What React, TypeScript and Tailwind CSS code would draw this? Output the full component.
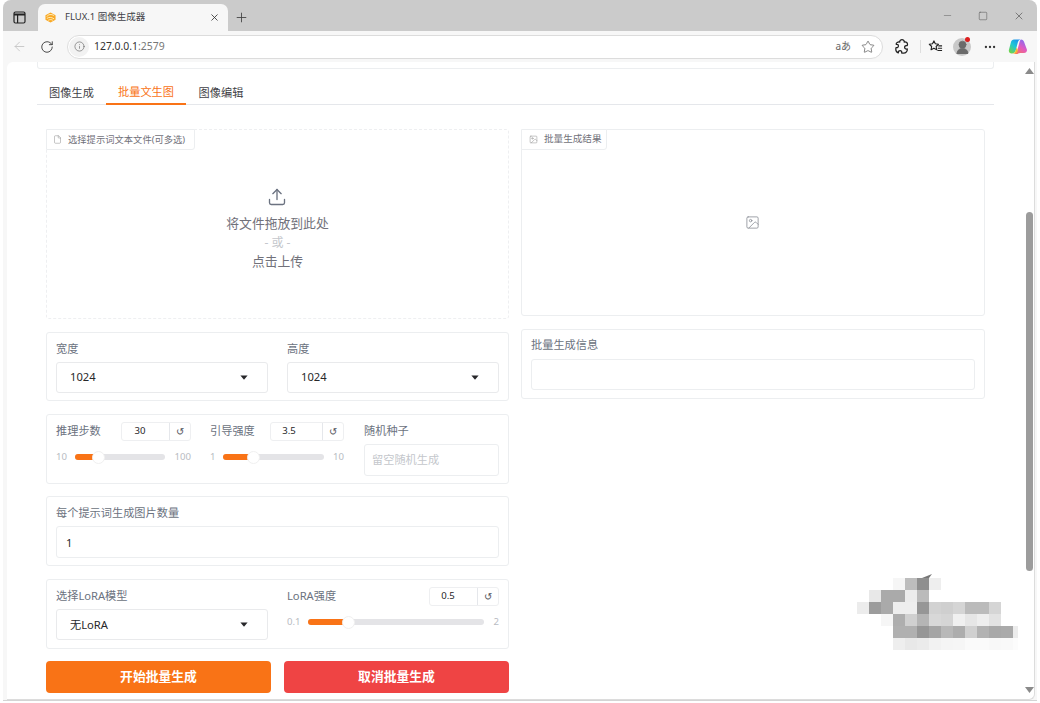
import React from "react";
import { Upload, RotateCw, ArrowLeft, Info, Star, X, Plus, Minus, Square, File, ImageIcon, Ellipsis, UserRound } from "lucide-react";

const Tri = () => (
  <svg width="8" height="5" viewBox="0 0 8 5" className="shrink-0"><path d="M0.4 0.4h7.200L4 4.700z" fill="#27272a" /></svg>
);

const Field = ({ label, value, valueClass = "" }: { label: string; value: string; valueClass?: string }) => (
  <div className="flex-1 min-w-0 flex flex-col">
    <div className="h-[29px] text-[11.2px] leading-[32px] text-[#6b7280]">{label}</div>
    <div className="h-[31px] flex items-center justify-between pl-[13px] pr-[19px] border border-[#e9eaec] rounded-[3px] bg-white text-[11.2px] text-[#27272a]">
      <span className={valueClass}>{value}</span>
      <Tri />
    </div>
  </div>
);

const NumBox = ({ value, w }: { value: string; w: number }) => (
  <div className="h-[19px] flex border border-[#eeeff1] rounded-[3px] text-[9.6px] text-[#27272a] bg-white shrink-0" style={{ width: w }}>
    <span className="w-[36px] flex items-center justify-center">{value}</span>
    <span className="flex-1" />
    <span className="w-[21px] border-l border-[#e5e7eb] flex items-center justify-center text-[#52525b] text-[10px]">↺</span>
  </div>
);

const Slider = ({ min, max, pct, track }: { min: string; max: string; pct: number; track: number }) => (
  <div className="flex items-center h-[14px] text-[9.6px] text-[#b8bbc2]">
    <span>{min}</span>
    <div className="flex-1" />
    <div className="relative h-[6px] rounded-full bg-[#e4e4e7] shrink-0 -ml-[1px] mr-[1px]" style={{ width: track }}>
      <div className="h-full rounded-full bg-[#f97316]" style={{ width: `${pct}%` }} />
      <div className="absolute top-[-3.5px] w-[13px] h-[13px] rounded-full bg-white border border-[#f0f0f0]" style={{ left: `calc(${pct}% - 3px)` }} />
    </div>
    <div className="flex-1" />
    <span>{max}</span>
  </div>
);

const Card = ({ className = "", children }: { className?: string; children: React.ReactNode }) => (
  <div className={`border border-[#eceef0] rounded-[3px] bg-white ${className}`}>{children}</div>
);

const mosaic: [number, number, string][] = [
  [0,3,"#f6f6f6"],[0,4,"#bdbdbd"],[0,5,"#8f8f8f"],[0,6,"#eeeeee"],
  [1,1,"#e8e8e8"],[1,2,"#aaaaaa"],[1,3,"#aaaaaa"],[1,4,"#ececec"],[1,5,"#bbbbbb"],
  [2,0,"#ececec"],[2,1,"#9c9c9c"],[2,2,"#aaaaaa"],[2,3,"#eeeeee"],[2,4,"#eeeeee"],[2,5,"#969696"],[2,6,"#d2d2d2"],[2,7,"#cfcfcf"],[2,8,"#d5d5d5"],[2,9,"#bbbbbb"],[2,10,"#bbbbbb"],[2,11,"#d5d5d5"],
  [3,2,"#f6f6f6"],[3,3,"#aeaeae"],[3,4,"#d0d0d0"],[3,5,"#b5b5b5"],[3,6,"#d8d8d8"],[3,7,"#d5d5d5"],[3,8,"#f0f0f0"],[3,9,"#e6e6e6"],[3,10,"#eeeeee"],[3,11,"#e2e2e2"],
  [4,3,"#b0b0b0"],[4,4,"#b0b0b0"],[4,5,"#969696"],[4,6,"#a5a5a5"],[4,7,"#b8b8b8"],[4,8,"#adadad"],[4,9,"#d0d0d0"],[4,10,"#b2b2b2"],[4,11,"#a8a8a8"],[4,12,"#aaaaaa"],[4,13,"#ececec"],
  [5,3,"#eeeeee"],[5,4,"#e8e8e8"],[5,5,"#ebebeb"],[5,6,"#f2f2f2"],[5,7,"#f5f5f5"],[5,8,"#f6f6f6"],[5,9,"#fafafa"],[5,10,"#fafafa"],[5,11,"#f8f8f8"],[5,12,"#f9f9f9"],[5,13,"#fcfcfc"],
];

export default function App() {
  return (
    <div className="w-[1040px] h-[703px] overflow-hidden bg-white px-[3px] pb-[2px]" style={{ fontFamily: '"Noto Sans", "Noto Sans CJK SC", sans-serif' }}>
      <div className="relative h-full flex flex-col rounded-t-[8px] bg-[#f7f7f7] overflow-hidden border-b border-[#d4d4d4]">
        {/* tab strip */}
        <div className="h-[31px] shrink-0 bg-[#cbcbcb] flex items-end">
          <div className="w-[35px] h-full flex items-center justify-center pr-[3px] pt-[3px]">
            <svg width="13" height="13" viewBox="0 0 13 13" fill="none" stroke="#222" strokeWidth="1.2"><rect x="1" y="1" width="11" height="11" rx="1.5" /><path d="M1 3.4h11" strokeWidth="2" /><path d="M4.6 3.4V12" /></svg>
          </div>
          <div className="w-[190px] h-[27px] bg-[#f7f7f7] rounded-t-[7px] flex items-center pl-[7px] pr-[8px]">
            <svg width="11" height="11" viewBox="0 0 12 12" className="shrink-0">
              <path d="M6 .5 11.500 3.500v5L6 11.500.5 8.500v-5z" fill="#f9a825" />
              <path d="M2 5c1.500-2.500 5-3 8-1M2 7c2.500-1.500 5-1.500 8 .5M3.500 9c2-1 3.500-1 5 0" fill="none" stroke="#fff3c4" strokeWidth="1" />
            </svg>
            <span className="ml-[9px] text-[9.5px] text-[#3f3f46] whitespace-nowrap">FLUX.1 图像生成器</span>
            <div className="flex-1" />
            <X size={11} color="#333" strokeWidth={1.8} />
          </div>
          <div className="w-[26px] h-full flex items-center justify-center pt-[3px]"><Plus size={15} color="#444" strokeWidth={1.4} /></div>
          <div className="flex-1" />
          <div className="h-full flex items-center">
            <div className="w-[36px] flex justify-center"><Minus size={11} color="#666" strokeWidth={1.2} /></div>
            <div className="w-[36px] flex justify-center"><Square size={10} color="#555" strokeWidth={1.3} /></div>
            <div className="w-[36px] flex justify-center"><X size={12} color="#444" strokeWidth={1.2} /></div>
          </div>
        </div>
        {/* toolbar */}
        <div className="h-[31px] shrink-0 flex items-center">
          <div className="w-[32px] flex justify-center"><ArrowLeft size={15} color="#c4c4c4" strokeWidth={1.4} /></div>
          <div className="w-[24px] flex justify-center"><RotateCw size={14} color="#333" strokeWidth={1.5} /></div>
          <div className="ml-[8px] w-[816px] h-[24px] bg-white rounded-full border border-[#dcdcdc] flex items-center">
            <div className="w-[20px] h-[20px] ml-[1px] rounded-full bg-[#f2f2f2] flex items-center justify-center"><Info size={11} color="#666" strokeWidth={1.4} /></div>
            <span className="ml-[5px] text-[10.4px] text-[#333]">127.0.0.1<span className="text-[#777]">:2579</span></span>
            <div className="flex-1" />
            <span className="text-[10px] text-[#666]">aあ</span>
            <Star size={14} color="#555" strokeWidth={1.2} className="ml-[10px] mr-[7px]" />
          </div>
          <div className="w-[37px] flex justify-center">
            <svg width="14" height="15" viewBox="0 0 14 15" fill="none" stroke="#222" strokeWidth="1.25" strokeLinejoin="round" strokeLinecap="round">
              <path d="M4.800 3.100C4.500 1.300 6 .7 7 .7s2.500.8 2.200 2.400c1.700-.4 3.300.4 3.300 2.200 0 .5-.2 1-.3 1.400-1.500-.5-2.600.4-2.600 1.600s1.200 2.200 2.700 1.600c.2 2.300-1.200 4.300-3.800 4.300-.7 0-1.300-.1-1.900-.2.600-1.300-.3-2.400-1.500-2.400s-2.100 1-1.700 2.200C1.900 13.500.8 12.200.8 10.200c0-.6.100-1.100.3-1.600C2.300 9 3.400 8.200 3.400 7S2.400 5 1.200 5.400C1 4 2.900 2.600 4.800 3.100z" />
            </svg>
          </div>
          <div className="w-[1px] h-[13px] bg-[#dedede]" />
          <div className="w-[32px] flex justify-center pr-[4px]">
            <svg width="15" height="15" viewBox="0 0 16 16" fill="none" stroke="#222" strokeWidth="1.2" strokeLinejoin="round"><path d="M6.300 2 7.800 5.100 11.200 5.600 8.700 8 9.300 11.400 6.300 9.800 3.300 11.400 3.900 8 1.400 5.600 4.800 5.100z" /><path d="M11 7.300h4M10.500 9.800h4.500M10 12.300h5" /></svg>
          </div>
          <div className="relative w-[18px] h-[18px] rounded-full bg-[#c9c9c9] overflow-hidden flex items-end justify-center">
            <UserRound size={17} color="#6b6b6b" fill="#6b6b6b" strokeWidth={1} />
          </div>
          <div className="w-[5px] h-[5px] rounded-full bg-[#dc1f1f] -ml-[6px] -mt-[14px] z-10" />
          <div className="w-[38px] ml-[-1px] flex justify-center pl-[3px]"><Ellipsis size={14} color="#333" strokeWidth={2} /></div>
          <div className="ml-[1px]">
            <svg width="20" height="18" viewBox="0 0 20 18">
              <defs>
                <linearGradient id="c1" x1="0.8" y1="0" x2="0.1" y2="0.9"><stop offset="0" stopColor="#1c8df0" /><stop offset="0.5" stopColor="#1fc7d4" /><stop offset="1" stopColor="#6fd44a" /></linearGradient>
                <linearGradient id="c2" x1="0.8" y1="0" x2="0.2" y2="1"><stop offset="0" stopColor="#7f6cf6" /><stop offset="0.5" stopColor="#e25ac0" /><stop offset="1" stopColor="#f8745a" /></linearGradient>
              </defs>
              <path d="M6 1.500h6.500c-1.500.4-2.300 1.500-2.700 3L8 11.500c-.7 2.500-2 4-4.300 4C1.500 15.500.3 13.800 1 11.500L3 4C3.400 2.500 4.500 1.500 6 1.500z" fill="url(#c1)" />
              <path d="M13 1.500c1.700 0 2.600 1 3 2.300l2.800 7.500c.7 2-.8 3.700-2.800 3.700h-2.500c-1.800 0-3.300.3-4 1h-4c2.200-.4 3.300-2 3.900-4l2-7.500C11.800 3 12 2 13 1.500z" fill="url(#c2)" />
              <path d="M3.700 15.500c2.300 0 3.700-1.500 4.300-4l.6-2c1.300 1.500 1.500 3.500.5 4.800-.7.900-1.600 1.200-2.600 1.200z" fill="#f8b62d" />
            </svg>
          </div>
        </div>
        {/* page */}
        <div className="flex-1 min-h-0 ml-[4px] mr-[2px] flex bg-white rounded-tl-[6px] rounded-br-[6px] border-r border-[#dcdcdc] border-b relative overflow-hidden">
          <div className="flex-1 min-w-0 flex flex-col">
            <div className="ml-[30px] w-[957px] h-[7px] border border-t-0 border-[#eceef0] rounded-b-[3px] shrink-0" />
            {/* tabs */}
            <div className="ml-[30px] w-[957px] mt-[11px] h-[25px] border-b border-[#e5e7eb] flex text-[11.2px] text-[#3f3f46] shrink-0">
              <div className="w-[69px] flex items-center justify-center h-[24px] pt-[2px]">图像生成</div>
              <div className="w-[80px] flex items-center justify-center h-[25px] pt-[2px] text-[#f97316] border-b-2 border-[#f97316]">批量文生图</div>
              <div className="w-[70px] flex items-center justify-center h-[24px] pt-[2px]">图像编辑</div>
            </div>
            <div className="ml-[39px] mt-[24px] flex gap-[12px] items-start">
              {/* left */}
              <div className="w-[463px] flex flex-col">
                <div className="h-[190px] border border-dashed border-[#eeeff1] rounded-[3px] relative flex flex-col items-center">
                  <div className="absolute left-[-1px] top-[-1px] h-[21px] w-[149px] border border-[#eceef0] rounded-br-[3px] flex items-center pl-[6px] bg-white text-[9.3px] text-[#71717a]">
                    <File size={9} color="#888" strokeWidth={1.3} />
                    <span className="ml-[6px] whitespace-nowrap">选择提示词文本文件(可多选)</span>
                  </div>
                  <Upload size={20} color="#6b7280" strokeWidth={1.6} className="mt-[57px] mr-[1px]" />
                  <div className="mt-[8px] text-[12.8px] leading-[17px] text-[#71717a]">将文件拖放到此处</div>
                  <div className="mt-[1px] text-[12px] leading-[19px] text-[#c4c7cc]">- 或 -</div>
                  <div className="text-[12.8px] leading-[19px] text-[#71717a]">点击上传</div>
                </div>
                <Card className="mt-[13px] h-[69px] px-[9px] flex gap-[19px]">
                  <Field label="宽度" value="1024" />
                  <Field label="高度" value="1024" />
                </Card>
                <Card className="mt-[13px] h-[70px] pl-[9px] pr-[9px] pt-[7px] flex">
                  <div className="w-[135px] flex flex-col">
                    <div className="flex items-center justify-between h-[19px]">
                      <span className="text-[11.2px] text-[#6b7280]">推理步数</span>
                      <NumBox value="30" w={70} />
                    </div>
                    <div className="mt-[9px]"><Slider min="10" max="100" pct={22} track={90} /></div>
                  </div>
                  <div className="w-[134px] ml-[19px] flex flex-col">
                    <div className="flex items-center justify-between h-[19px]">
                      <span className="text-[11.2px] text-[#6b7280]">引导强度</span>
                      <NumBox value="3.5" w={74} />
                    </div>
                    <div className="mt-[9px]"><Slider min="1" max="10" pct={27} track={101} /></div>
                  </div>
                  <div className="flex-1 ml-[20px] flex flex-col">
                    <div className="h-[19px] flex items-center text-[11.2px] text-[#6b7280]">随机种子</div>
                    <div className="mt-[3px] h-[32px] border border-[#eceef0] rounded-[3px] flex items-center pl-[7px] text-[11.2px] text-[#c4c7cc]">留空随机生成</div>
                  </div>
                </Card>
                <Card className="mt-[12px] h-[70px] px-[9px] flex flex-col">
                  <div className="h-[29px] text-[11.2px] leading-[32px] text-[#6b7280]">每个提示词生成图片数量</div>
                  <div className="h-[32px] border border-[#eceef0] rounded-[3px] flex items-center pl-[9px] pt-[2px] text-[11.2px] text-[#27272a]">1</div>
                </Card>
                <Card className="mt-[13px] h-[70px] pl-[9px] pr-[9px] flex gap-[19px]">
                  <Field label="选择LoRA模型" value="无LoRA" valueClass="pt-[2px]" />
                  <div className="flex-1 min-w-0 flex flex-col pt-[7px]">
                    <div className="flex items-center justify-between h-[19px]">
                      <span className="text-[11.2px] text-[#6b7280]">LoRA强度</span>
                      <NumBox value="0.5" w={70} />
                    </div>
                    <div className="mt-[9px]"><Slider min="0.1" max="2" pct={21} track={176} /></div>
                  </div>
                </Card>
                <div className="mt-[12px] flex gap-[13px] text-[12.8px] font-semibold text-white">
                  <div className="w-[225px] h-[32px] rounded-[4px] bg-[#f97316] flex items-center justify-center">开始批量生成</div>
                  <div className="w-[225px] h-[32px] rounded-[4px] bg-[#ef4444] flex items-center justify-center">取消批量生成</div>
                </div>
              </div>
              {/* right */}
              <div className="w-[464px] flex flex-col">
                <div className="h-[187px] border border-[#eceef0] rounded-[3px] relative flex items-center justify-center">
                  <div className="absolute left-[-1px] top-[-1px] h-[21px] w-[86px] border border-[#eceef0] rounded-br-[3px] flex items-center pl-[7px] bg-white text-[9.6px] text-[#71717a]">
                    <ImageIcon size={9} color="#888" strokeWidth={1.3} />
                    <span className="ml-[6px] whitespace-nowrap">批量生成结果</span>
                  </div>
                  <ImageIcon size={15} color="#8b8f96" strokeWidth={1.3} className="mr-[1px]" />
                </div>
                <Card className="mt-[13px] h-[70px] px-[9px] flex flex-col">
                  <div className="h-[29px] text-[11.2px] leading-[30px] text-[#6b7280]">批量生成信息</div>
                  <div className="h-[31px] border border-[#eceef0] rounded-[3px]" />
                </Card>
              </div>
            </div>
          </div>
          {/* scrollbar */}
          <div className="w-[10px] shrink-0 flex flex-col items-center">
            <svg width="9" height="6" viewBox="0 0 9 6" className="mt-[6px]"><path d="M4.500 0 9 6H0z" fill="#8a8a8a" /></svg>
            <div className="w-[7px] h-[359px] mt-[138px] rounded-full bg-[#9c9c9c] ml-[1px]" />
            <div className="flex-1" />
            <svg width="9" height="6" viewBox="0 0 9 6" className="mb-[6px]"><path d="M0 0h9L4.500 6z" fill="#8a8a8a" /></svg>
          </div>
          {/* blurred mosaic */}
          <svg className="absolute left-[850px] top-[512px]" width="168" height="78" viewBox="0 0 168 78" shapeRendering="crispEdges">
            {mosaic.map(([r, c, f], i) => (
              <rect key={i} x={c * 12} y={r * 12 + 4} width={c === 13 ? 5 : 12} height="12" fill={f} />
            ))}
            <path d="M65 4 75 0 72 4z" fill="#777" shapeRendering="auto" />
          </svg>
        </div>
      </div>
    </div>
  );
}
